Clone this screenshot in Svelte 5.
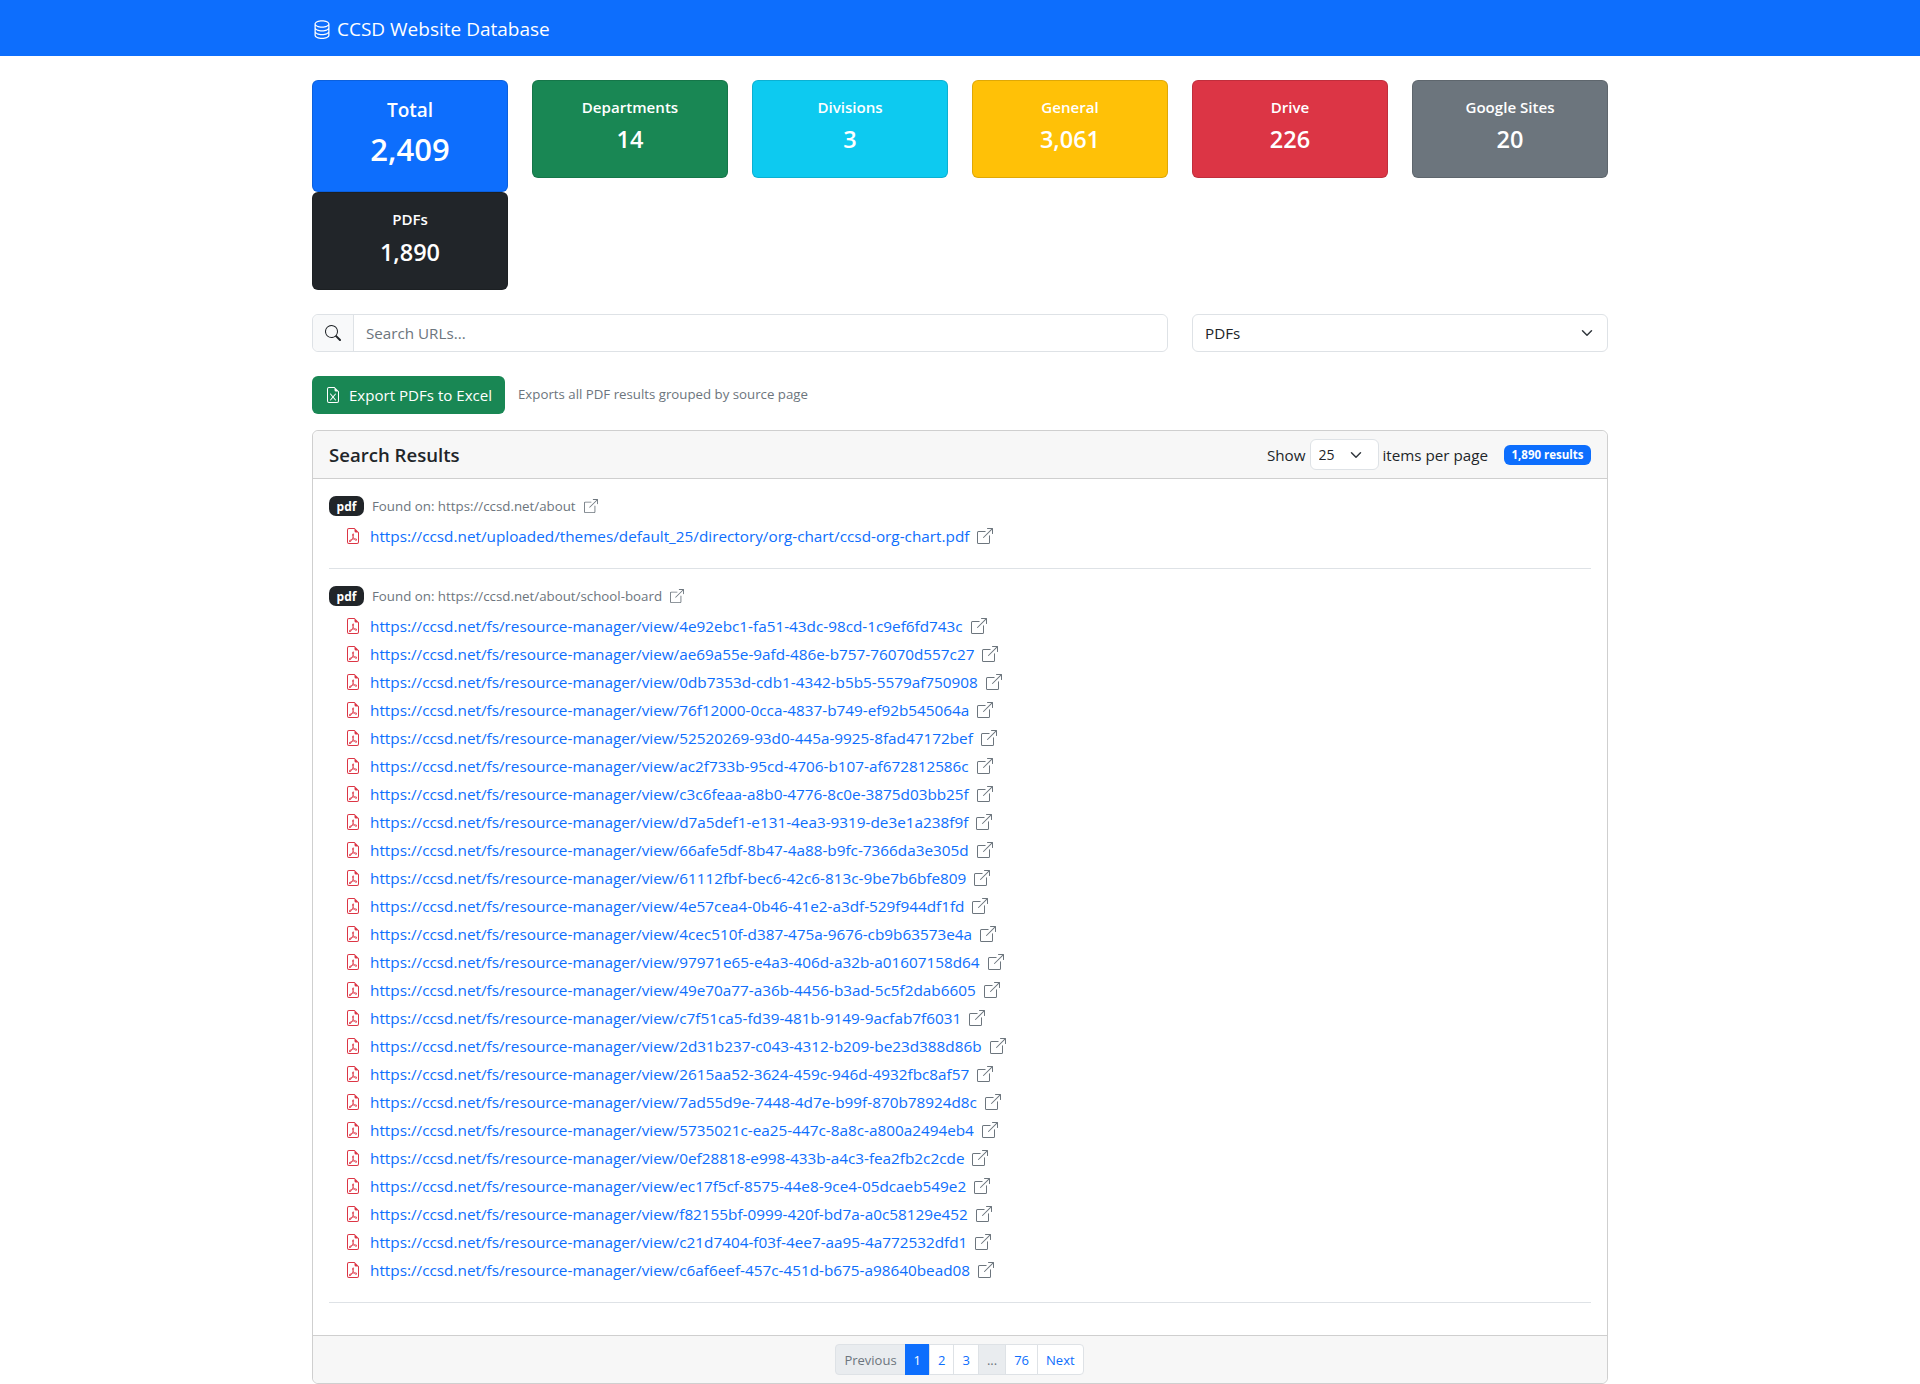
<script>
    const stats = [
        { label: "Total", value: "2,409", color: "blue", big: true },
        { label: "Departments", value: "14", color: "green" },
        { label: "Divisions", value: "3", color: "cyan" },
        { label: "General", value: "3,061", color: "yellow" },
        { label: "Drive", value: "226", color: "red" },
        { label: "Google Sites", value: "20", color: "gray" },
        { label: "PDFs", value: "1,890", color: "dark" },
    ];

    const base = "https://ccsd.net/fs/resource-manager/view/";
    const groups = [
        {
            source: "https://ccsd.net/about",
            links: ["https://ccsd.net/uploaded/themes/default_25/directory/org-chart/ccsd-org-chart.pdf"],
        },
        {
            source: "https://ccsd.net/about/school-board",
            links: [
                "4e92ebc1-fa51-43dc-98cd-1c9ef6fd743c",
                "ae69a55e-9afd-486e-b757-76070d557c27",
                "0db7353d-cdb1-4342-b5b5-5579af750908",
                "76f12000-0cca-4837-b749-ef92b545064a",
                "52520269-93d0-445a-9925-8fad47172bef",
                "ac2f733b-95cd-4706-b107-af672812586c",
                "c3c6feaa-a8b0-4776-8c0e-3875d03bb25f",
                "d7a5def1-e131-4ea3-9319-de3e1a238f9f",
                "66afe5df-8b47-4a88-b9fc-7366da3e305d",
                "61112fbf-bec6-42c6-813c-9be7b6bfe809",
                "4e57cea4-0b46-41e2-a3df-529f944df1fd",
                "4cec510f-d387-475a-9676-cb9b63573e4a",
                "97971e65-e4a3-406d-a32b-a01607158d64",
                "49e70a77-a36b-4456-b3ad-5c5f2dab6605",
                "c7f51ca5-fd39-481b-9149-9acfab7f6031",
                "2d31b237-c043-4312-b209-be23d388d86b",
                "2615aa52-3624-459c-946d-4932fbc8af57",
                "7ad55d9e-7448-4d7e-b99f-870b78924d8c",
                "5735021c-ea25-447c-8a8c-a800a2494eb4",
                "0ef28818-e998-433b-a4c3-fea2fb2c2cde",
                "ec17f5cf-8575-44e8-9ce4-05dcaeb549e2",
                "f82155bf-0999-420f-bd7a-a0c58129e452",
                "c21d7404-f03f-4ee7-aa95-4a772532dfd1",
                "c6af6eef-457c-451d-b675-a98640bead08",
            ].map((id) => base + id),
        },
    ];

    const pages = [
        { label: "Previous", kind: "off" },
        { label: "1", kind: "on" },
        { label: "2" },
        { label: "3" },
        { label: "...", kind: "off" },
        { label: "76" },
        { label: "Next" },
    ];

    const filePath = "M14 14V4.5L9.5 0H4a2 2 0 0 0-2 2v12a2 2 0 0 0 2 2h8a2 2 0 0 0 2-2zM9.5 3A1.5 1.5 0 0 0 11 4.5h2V14a1 1 0 0 1-1 1H4a1 1 0 0 1-1-1V2a1 1 0 0 1 1-1h5.5v2z";
    const pdfPath = "M4.603 14.087a.81.81 0 0 1-.438-.42c-.195-.388-.13-.776.08-1.102.198-.307.526-.568.897-.787a7.68 7.68 0 0 1 1.482-.645 19.697 19.697 0 0 0 1.062-2.227 7.269 7.269 0 0 1-.43-1.295c-.086-.4-.119-.796-.046-1.136.075-.354.274-.672.65-.823.192-.077.4-.12.602-.077a.7.7 0 0 1 .477.365c.088.164.12.356.127.538.007.188-.012.396-.047.614-.084.51-.27 1.134-.52 1.794a10.954 10.954 0 0 0 .98 1.686 5.753 5.753 0 0 1 1.334.05c.364.066.734.195.96.465.12.144.193.32.2.518.007.192-.047.382-.138.563a1.04 1.04 0 0 1-.354.416.856.856 0 0 1-.51.138c-.331-.014-.654-.196-.933-.417a5.712 5.712 0 0 1-.911-.95 11.651 11.651 0 0 0-1.997.406 11.307 11.307 0 0 1-1.02 1.51c-.292.35-.609.656-.927.787a.793.793 0 0 1-.58.029zm1.379-1.901c-.166.076-.32.156-.459.238-.328.194-.541.383-.647.547-.094.145-.096.25-.04.361.01.022.02.036.026.044a.266.266 0 0 0 .035-.012c.137-.056.355-.235.635-.572a8.18 8.18 0 0 0 .45-.606zm1.64-1.33a12.71 12.71 0 0 1 1.01-.193 11.744 11.744 0 0 1-.51-.858 20.801 20.801 0 0 1-.5 1.05zm2.446.45c.15.163.296.3.435.41.24.19.407.253.498.256a.107.107 0 0 0 .07-.015.307.307 0 0 0 .094-.125.436.436 0 0 0 .059-.2.095.095 0 0 0-.026-.063c-.052-.062-.2-.152-.518-.209a3.876 3.876 0 0 0-.612-.053zM8.078 7.8a6.7 6.7 0 0 0 .2-.828c.031-.188.043-.343.038-.465a.613.613 0 0 0-.032-.198.517.517 0 0 0-.145.04c-.087.035-.158.106-.196.283-.04.192-.03.469.046.822.024.111.054.227.09.346z";
    const extA = "M8.636 3.5a.5.5 0 0 0-.5-.5H1.5A1.5 1.5 0 0 0 0 4.5v10A1.5 1.5 0 0 0 1.5 16h10a1.5 1.5 0 0 0 1.5-1.5V7.864a.5.5 0 0 0-1 0V14.5a.5.5 0 0 1-.5.5h-10a.5.5 0 0 1-.5-.5v-10a.5.5 0 0 1 .5-.5h6.636a.5.5 0 0 0 .5-.5z";
    const extB = "M16 .5a.5.5 0 0 0-.5-.5h-5a.5.5 0 0 0 0 1h3.793L6.146 9.146a.5.5 0 1 0 .708.708L15 1.707V5.5a.5.5 0 0 0 1 0v-5z";
</script>

{#snippet ext(size)}
    <svg class="ext" width={size} height={size} viewBox="0 0 16 16" fill="currentColor"><path d={extA} /><path d={extB} /></svg>
{/snippet}

<nav class="navbar">
    <div class="container">
        <svg width="20" height="20" viewBox="0 0 16 16" fill="currentColor"><path d="M4.318 2.687C5.234 2.271 6.536 2 8 2s2.766.27 3.682.687C12.644 3.125 13 3.627 13 4c0 .374-.356.875-1.318 1.313C10.766 5.729 9.464 6 8 6s-2.766-.27-3.682-.687C3.356 4.875 3 4.373 3 4c0-.374.356-.875 1.318-1.313ZM13 5.698V7c0 .374-.356.875-1.318 1.313C10.766 8.729 9.464 9 8 9s-2.766-.27-3.682-.687C3.356 7.875 3 7.373 3 7V5.698c.271.202.58.378.904.525C4.978 6.711 6.427 7 8 7s3.022-.289 4.096-.777A4.92 4.92 0 0 0 13 5.698ZM14 4c0-1.007-.875-1.755-1.904-2.223C11.022 1.289 9.573 1 8 1s-3.022.289-4.096.777C2.875 2.245 2 2.993 2 4v9c0 1.007.875 1.755 1.904 2.223C4.978 15.71 6.427 16 8 16s3.022-.289 4.096-.777C13.125 14.755 14 14.007 14 13V4Zm-1 4.698V10c0 .374-.356.875-1.318 1.313C10.766 11.729 9.464 12 8 12s-2.766-.27-3.682-.687C3.356 10.875 3 10.373 3 10V8.698c.271.202.58.378.904.525C4.978 9.71 6.427 10 8 10s3.022-.289 4.096-.777A4.92 4.92 0 0 0 13 8.698Zm0 3V13c0 .374-.356.875-1.318 1.313C10.766 14.729 9.464 15 8 15s-2.766-.27-3.682-.687C3.356 13.875 3 13.373 3 13v-1.302c.271.202.58.378.904.525C4.978 12.71 6.427 13 8 13s3.022-.289 4.096-.777c.324-.147.633-.323.904-.525Z" /></svg>
        <span class="brand">CCSD Website Database</span>
    </div>
</nav>

<main class="container">
    <div class="stats">
        {#each stats as s}
            <div class="stat {s.color}" class:big={s.big}>
                <div class="label">{s.label}</div>
                <div class="value">{s.value}</div>
            </div>
        {/each}
    </div>

    <div class="filters">
        <div class="search">
            <span class="addon">
                <svg width="16" height="16" viewBox="0 0 16 16" fill="currentColor"><path d="M11.742 10.344a6.5 6.5 0 1 0-1.397 1.398h-.001c.03.04.062.078.098.115l3.85 3.85a1 1 0 0 0 1.415-1.414l-3.85-3.85a1.007 1.007 0 0 0-.115-.1zM12 6.5a5.5 5.5 0 1 1-11 0 5.5 5.5 0 0 1 11 0z" /></svg>
            </span>
            <input type="text" placeholder="Search URLs..." />
        </div>
        <select class="type">
            <option>PDFs</option>
        </select>
    </div>

    <div class="export">
        <button class="btn">
            <svg width="16" height="16" viewBox="0 0 16 16" fill="currentColor"><path d="M5.884 6.68a.5.5 0 1 0-.768.64L7.349 10l-2.233 2.68a.5.5 0 0 0 .768.64L8 10.781l2.116 2.54a.5.5 0 0 0 .768-.641L8.651 10l2.233-2.68a.5.5 0 0 0-.768-.64L8 9.219l-2.116-2.54z" /><path d={filePath} /></svg>
            Export PDFs to Excel
        </button>
        <small>Exports all PDF results grouped by source page</small>
    </div>

    <section class="card">
        <header class="card-head">
            <h5>Search Results</h5>
            <div class="tools">
                <span>Show</span>
                <select class="per">
                    <option>25</option>
                </select>
                <span>items per page</span>
                <span class="count">1,890 results</span>
            </div>
        </header>

        <div class="card-body">
            {#each groups as g}
                <div class="group">
                    <div class="source">
                        <span class="tag">pdf</span>
                        <span>Found on: {g.source}</span>
                        {@render ext(14)}
                    </div>
                    {#each g.links as url}
                        <div class="link">
                            <svg class="pdf" width="16" height="16" viewBox="0 0 16 16" fill="currentColor"><path d={filePath} /><path d={pdfPath} /></svg>
                            <a href={url}>{url}</a>
                            {@render ext(16)}
                        </div>
                    {/each}
                </div>
            {/each}
        </div>

        <footer class="card-foot">
            <ul class="pagination">
                {#each pages as p}
                    <li class={p.kind}>{p.label}</li>
                {/each}
            </ul>
        </footer>
    </section>
</main>

<style>
    :global(body) {
        font-family: "Open Sans", "Noto Sans", sans-serif;
        font-size: 15.2px;
        color: #212529;
        background: #fff;
    }
    .container {
        width: 1296px;
        margin: 0 auto;
    }
    .navbar {
        height: 56px;
        background: #0d6efd;
        color: #fff;
        display: flex;
        align-items: center;
    }
    .navbar .container {
        display: flex;
        align-items: center;
        gap: 5px;
        padding-top: 2px;
    }
    .brand {
        font-size: 19px;
    }
    main {
        padding-top: 24px;
    }
    .stats {
        display: flex;
        flex-wrap: wrap;
        column-gap: 24px;
        align-items: flex-start;
        margin-bottom: 24px;
    }
    .stat {
        width: 196px;
        height: 98px;
        box-sizing: border-box;
        padding: 17px 16px 0;
        border: 1px solid rgba(0, 0, 0, 0.125);
        border-radius: 6px;
        color: #fff;
        text-align: center;
    }
    .stat .label {
        font-size: 15.1px;
        font-weight: 600;
        line-height: 19px;
        margin-bottom: 8px;
    }
    .stat .value {
        font-size: 23.5px;
        font-weight: 600;
        line-height: 29px;
    }
    .stat.big {
        height: 112px;
    }
    .big .label {
        font-size: 19px;
        line-height: 24px;
    }
    .big .value {
        font-size: 31px;
        line-height: 38px;
    }
    .dark .value {
        padding-top: 1px;
    }
    .blue { background: #0d6efd; }
    .green { background: #198754; }
    .cyan { background: #0dcaf0; }
    .yellow { background: #ffc107; }
    .red { background: #dc3545; }
    .gray { background: #6c757d; }
    .dark { background: #212529; }

    .filters {
        display: grid;
        grid-template-columns: 856px 1fr;
        column-gap: 24px;
        margin-bottom: 24px;
    }
    .search {
        display: flex;
        height: 38px;
        box-sizing: border-box;
        border: 1px solid #dee2e6;
        border-radius: 6px;
    }
    .addon {
        width: 41px;
        box-sizing: border-box;
        display: flex;
        align-items: center;
        justify-content: center;
        background: #f8f9fa;
        border-right: 1px solid #dee2e6;
        border-radius: 6px 0 0 6px;
    }
    input {
        flex: 1;
        border: 0;
        outline: 0;
        padding: 0 12px;
        font: inherit;
        border-radius: 0 6px 6px 0;
    }
    input::placeholder {
        color: #6c757d;
        opacity: 1;
    }
    select {
        appearance: none;
        font: inherit;
        color: #212529;
        background-color: #fff;
        background-image: url("data:image/svg+xml,%3csvg xmlns='http://www.w3.org/2000/svg' viewBox='0 0 16 16'%3e%3cpath fill='none' stroke='%23343a40' stroke-linecap='round' stroke-linejoin='round' stroke-width='2' d='m2 5 6 6 6-6'/%3e%3c/svg%3e");
        background-repeat: no-repeat;
        border: 1px solid #dee2e6;
        border-radius: 6px;
    }
    .type {
        height: 38px;
        padding: 0 36px 0 12px;
        background-position: right 12px center;
        background-size: 16px 12px;
    }
    .export {
        display: flex;
        align-items: center;
        gap: 13px;
        margin-bottom: 16px;
    }
    .btn {
        height: 38px;
        width: 193px;
        display: flex;
        align-items: center;
        justify-content: center;
        gap: 8px;
        padding: 0;
        border: 0;
        border-radius: 6px;
        background: #198754;
        color: #fff;
        font: inherit;
        font-size: 15.1px;
    }
    small {
        font-size: 13.25px;
        color: #6c757d;
        margin-top: -2px;
    }
    .card {
        border: 1px solid #cfcfcf;
        border-radius: 6px;
    }
    .card-head {
        height: 48px;
        box-sizing: border-box;
        display: flex;
        align-items: center;
        justify-content: space-between;
        padding: 0 16px;
        background: #f7f7f7;
        border-bottom: 1px solid #cfcfcf;
        border-radius: 6px 6px 0 0;
    }
    h5 {
        margin: 0;
        font-size: 18.6px;
        font-weight: 600;
    }
    .tools {
        display: flex;
        align-items: center;
        gap: 4px;
    }
    .per {
        width: 69px;
        height: 31px;
        padding: 0 8px;
        font-size: 14px;
        background-position: right 14px center;
        background-size: 16px 12px;
    }
    .count {
        margin-left: 12px;
        height: 20px;
        width: 87px;
        display: flex;
        align-items: center;
        justify-content: center;
        background: #0d6efd;
        color: #fff;
        font-size: 11.5px;
        font-weight: 700;
        border-radius: 6px;
    }
    .card-body {
        padding: 17px 16px 15px;
    }
    .group {
        padding-bottom: 18px;
        margin-bottom: 17px;
        border-bottom: 1px solid #dee2e6;
    }
    .source {
        display: flex;
        align-items: center;
        height: 20px;
        margin-bottom: 6px;
        font-size: 13.3px;
        color: #6c757d;
    }
    .source .ext {
        margin-left: 8px;
    }
    .tag {
        width: 35px;
        height: 20px;
        margin-right: 8px;
        display: flex;
        align-items: center;
        justify-content: center;
        background: #212529;
        color: #fff;
        font-size: 12px;
        font-weight: 700;
        border-radius: 7px;
    }
    .link {
        display: flex;
        align-items: center;
        height: 28px;
        padding-left: 16px;
    }
    .pdf {
        color: #dc3545;
        margin-right: 9px;
    }
    .link a {
        color: #0d6efd;
        text-decoration: none;
        font-size: 15.3px;
    }
    .link .ext {
        margin-left: 8px;
        color: #6c757d;
    }
    .card-foot {
        height: 48px;
        box-sizing: border-box;
        display: flex;
        align-items: center;
        justify-content: center;
        background: #f7f7f7;
        border-top: 1px solid #cfcfcf;
        border-radius: 0 0 6px 6px;
    }
    .pagination {
        display: flex;
        margin: 0;
        padding: 0;
        list-style: none;
        font-size: 13px;
    }
    .pagination li {
        height: 31px;
        box-sizing: border-box;
        padding: 0 8px;
        display: flex;
        align-items: center;
        color: #0d6efd;
        background: #fff;
        border: 1px solid #dee2e6;
        margin-left: -1px;
    }
    .pagination li:first-child {
        border-radius: 4px 0 0 4px;
    }
    .pagination li:last-child {
        border-radius: 0 4px 4px 0;
    }
    .pagination .off {
        background: #e9ecef;
        color: #6c757d;
    }
    .pagination .on {
        background: #0d6efd;
        border-color: #0d6efd;
        color: #fff;
    }
</style>
